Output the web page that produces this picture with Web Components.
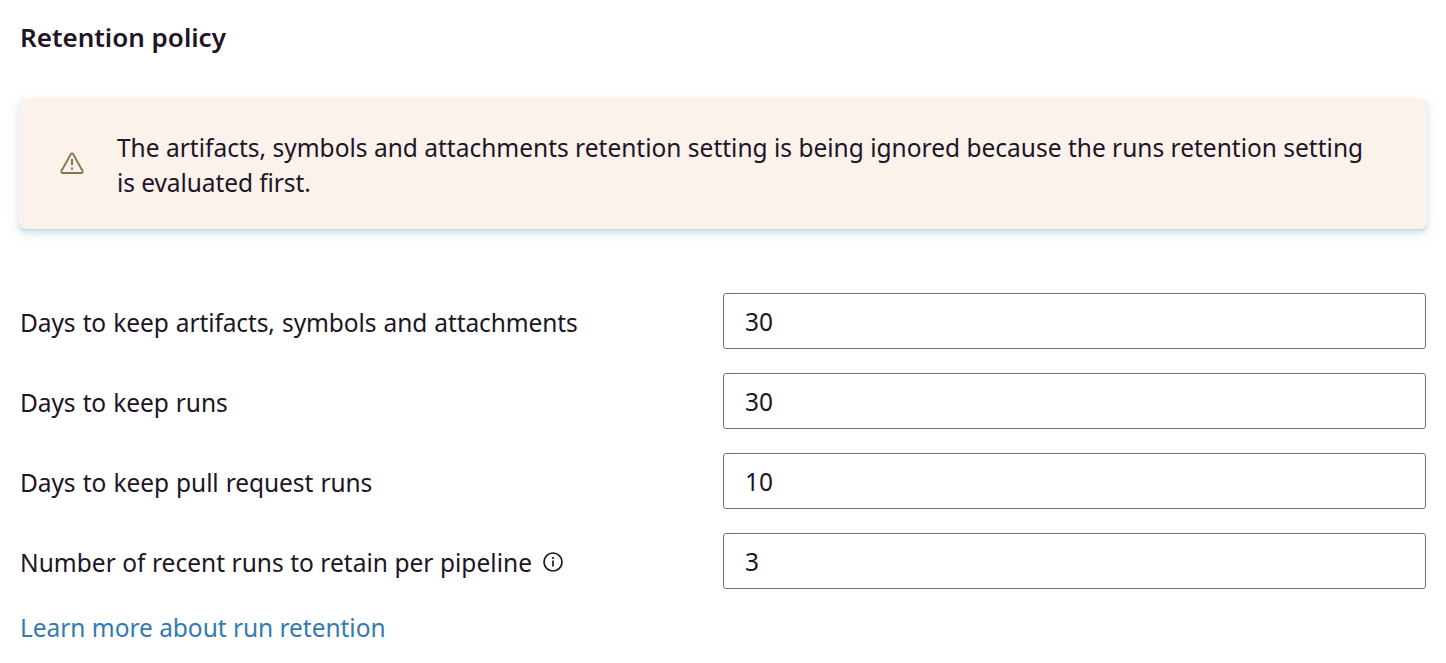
<!DOCTYPE html>
<html lang="en">
<head>
<meta charset="utf-8">
<title>Retention policy</title>
<style>
body{margin:0;background:#fff;color:#211426;font:24.5px/35px "Noto Sans","Open Sans",sans-serif}
</style>
</head>
<body>
<retention-page>
  <alert-card>
    <text-line>The artifacts, symbols and attachments retention setting is being ignored because the runs retention setting</text-line>
    <text-line style="letter-spacing:-.08px">is evaluated first.</text-line>
  </alert-card>
  <setting-row value="30"><text-line style="word-spacing:1px;letter-spacing:-.12px">Days to keep artifacts, symbols and attachments</text-line></setting-row>
  <setting-row value="30"><text-line style="word-spacing:1px;letter-spacing:-.12px">Days to keep runs</text-line></setting-row>
  <setting-row value="10"><text-line style="word-spacing:1px;letter-spacing:-.1px">Days to keep pull request runs</text-line></setting-row>
  <setting-row value="3"><text-line style="letter-spacing:.03px">Number of recent runs to retain per pipeline</text-line><info-icon></info-icon></setting-row>
  <help-link slot="footer">Learn more about run retention</help-link>
</retention-page>
<script>
const define = (name, html) => customElements.define(name, class extends HTMLElement {
  constructor() {
    super();
    this.attachShadow({ mode: 'open' }).innerHTML = html;
  }
  connectedCallback() {
    const out = this.shadowRoot.querySelector('input');
    if (out) out.value = this.getAttribute('value');
  }
});
define('text-line', '<style>:host{display:block;white-space:nowrap}</style><slot></slot>');
define('info-icon', `<style>:host{display:block;width:20px;height:20px;margin:-2px 0 0 11px}svg{display:block}</style>
<svg width="20" height="20" viewBox="0 0 20 20" fill="none" stroke="#211426" stroke-width="1.7"><circle cx="10" cy="10" r="9"/><path d="M10 8.5v6M10 5v2"/></svg>`);
define('alert-card', `<style>
:host{display:flex;align-items:center;box-sizing:border-box;height:131px;margin:0 19px;padding-left:41px;border-radius:6px;background:#fbf2ec;
box-shadow:0 1px 0 #c4d8e2,0 4px 5px rgba(160,210,225,.45),0 4px 16px rgba(60,90,80,.09)}
svg{flex:none;margin-right:33px}
.text{padding-top:3px}</style>
<svg width="24" height="24" viewBox="0 0 24 24" fill="none" stroke="#89714f" stroke-width="1.8" stroke-linejoin="round"><path d="M10.8 2.2Q12 .6 13.2 2.2L22.6 19Q23.1 21 21.2 21H2.8Q.9 21 1.4 19Z"/><path d="M12 7v6M12 15.5v2.2" stroke-width="2"/></svg>
<div class="text"><slot></slot></div>`);
define('setting-row', `<style>
:host{display:grid;grid-template-columns:703px 703px;height:56px;margin:0 20px}
.label{display:flex;align-items:center;padding-top:3px}
input{box-sizing:border-box;width:703px;height:56px;margin:0;padding:1px 21px 0;border:1px solid #7f7065;border-radius:3px;background:#fff;color:inherit;font:inherit;outline:0}
</style><div class="label"><slot></slot></div><input type="text" aria-label="Value">`);
define('help-link', `<style>:host{display:block;margin:0 20px}a{color:#327ab3;text-decoration:none;white-space:nowrap;letter-spacing:-.04px}</style><a href="#"><slot></slot></a>`);
define('retention-page', `<style>
:host{display:block;height:663px;overflow:hidden}
h1{margin:0;padding:20px 20px 43px;font-size:26px;line-height:35px;font-weight:600}
.rows{display:flex;flex-direction:column;gap:24px}
::slotted(alert-card){margin-bottom:40px}
footer{padding-top:21px}</style>
<h1>Retention policy</h1><div class="rows"><slot></slot></div><footer><slot name="footer"></slot></footer>`);
</script>
</body>
</html>
